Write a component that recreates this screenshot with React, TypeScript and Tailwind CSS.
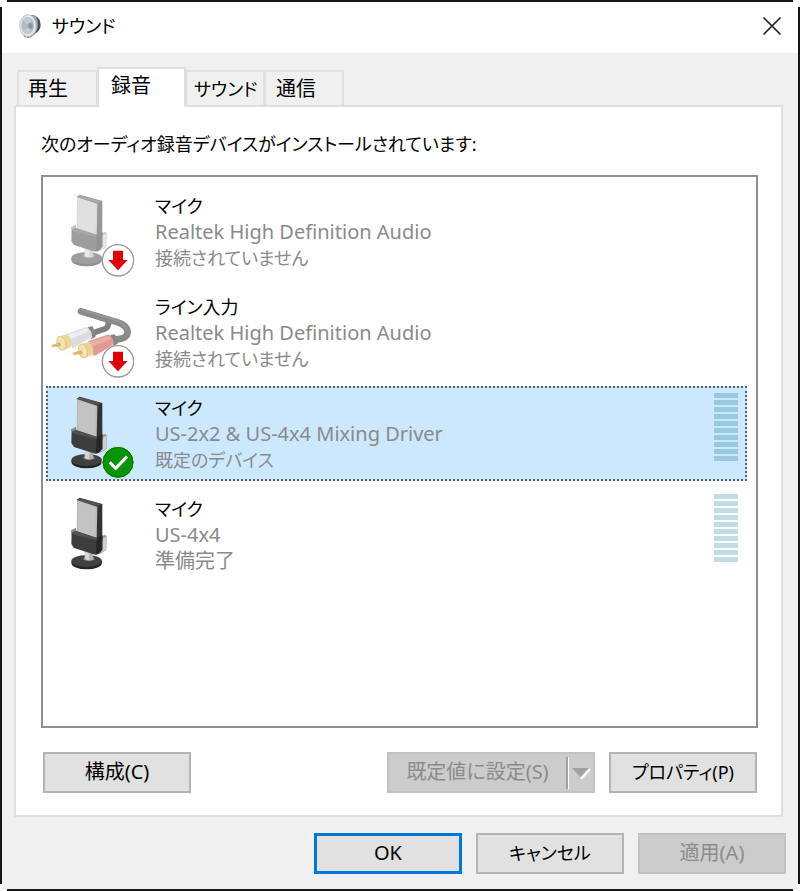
import { useState } from 'react'
import type { ReactNode } from 'react'
import clsx from 'clsx'

type DeviceStatus = 'unplugged' | 'default' | 'ready'

interface Device {
  id: string
  kind: 'mic' | 'line'
  name: string
  driver: string
  statusText: string
  status: DeviceStatus
}

const DEVICES: Device[] = [
  { id: 'mic-realtek', kind: 'mic', name: 'マイク', driver: 'Realtek High Definition Audio', statusText: '接続されていません', status: 'unplugged' },
  { id: 'line-realtek', kind: 'line', name: 'ライン入力', driver: 'Realtek High Definition Audio', statusText: '接続されていません', status: 'unplugged' },
  { id: 'mic-mixing', kind: 'mic', name: 'マイク', driver: 'US-2x2 & US-4x4 Mixing Driver', statusText: '既定のデバイス', status: 'default' },
  { id: 'mic-us4x4', kind: 'mic', name: 'マイク', driver: 'US-4x4', statusText: '準備完了', status: 'ready' },
]

const TABS = [
  { id: 'playback', label: '再生', size: 'w-[81px] pl-[9px]' },
  { id: 'recording', label: '録音', size: 'w-[89px] pl-3' },
  { id: 'sounds', label: 'サウンド', size: 'w-20 pl-[7px]' },
  { id: 'comms', label: '通信', size: 'w-20 pl-[10px]' },
]

const labelSize = (text: string) => (/[ぁ-ヶ]{2}/.test(text) ? 'text-[18px]' : 'text-[20px]')

function SpeakerIcon() {
  return (
    <svg viewBox="0 0 72 78" className="w-6 h-[26px]" aria-hidden="true">
      <path d="M38 6 L52 8 Q68 16 68 38 Q66 52 54 60 L38 72 Z" fill="#4f5355" />
      <path d="M42 7 L54 10 Q61 22 59 42 Q56 58 42 70 Z" fill="#9fa2a4" />
      <ellipse cx="30" cy="39" rx="25" ry="34" fill="#e6e8e8" stroke="#b4b8ba" strokeWidth="2" />
      <path d="M18 68 Q34 80 48 62" fill="none" stroke="#85898b" strokeWidth="4" strokeDasharray="7 3" />
      <path d="M8 24 Q18 4 34 7" fill="none" stroke="#c9cccd" strokeWidth="4" strokeDasharray="7 3" />
      <ellipse cx="29" cy="38" rx="19" ry="26" fill="#aebcc4" />
      <path d="M14 22 Q26 6 40 20 L32 38 Z" fill="#bfcbd2" />
      <ellipse cx="37" cy="39" rx="7" ry="9" fill="#8698a2" />
      <path d="M14 50 Q24 70 40 58 L33 45 Z" fill="#c3ced4" />
    </svg>
  )
}

function MicDrawing() {
  return (
    <g transform="translate(2 3)">
      <ellipse cx="108" cy="221" rx="46" ry="20" fill="#232323" />
      <ellipse cx="108" cy="216" rx="46" ry="18" fill="#404040" />
      <ellipse cx="115" cy="209" rx="17" ry="7" fill="#8d8d8d" />
      <path d="M100 182 H129 L126 211 Q114 217 103 210 Z" fill="#d4d4d4" />
      <path d="M116 188 H129 L126 211 L116 214 Z" fill="#b0b0b0" />
      <path d="M61 124 L76 116 L80 150 L64 168 Z" fill="#8a8a8a" />
      <path d="M140 146 L164 137 L168 141 L167 183 L146 196 Z" fill="#9a9a9a" />
      <path d="M151 151 L167 143 L166 182 L151 190 Z" fill="#cfcfcf" />
      <path d="M78 32 L87 26 L155 45 L155 155 L138 163 Z" fill="#333333" />
      <path d="M80 32 L88 28 L152 46 L141 51 Z" fill="#565656" />
      <path d="M79 33 L140 53 L138 152 L78 130 Z" fill="#b9b9b9" />
      <path d="M83 38 L135 55 L134 146 L82 127 Z" fill="#c3c3c3" />
      <path d="M64 131 L76 126 L138 146 L155 139 L155 182 L143 195 L134 197 L70 177 L62 165 Z" fill="#3d3d3d" />
      <path d="M138 146 L155 139 L155 182 L143 195 L136 196 Z" fill="#272727" />
      <path d="M65 132 L76 127 L138 147 L137 154 L66 136 Z" fill="#525252" />
    </g>
  )
}

function CableDrawing() {
  return (
    <g>
      <g fill="none" strokeLinecap="round">
        <path d="M93 76 L172 100 Q184 126 152 133 L125 142" stroke="#808080" strokeWidth="17" />
        <path d="M93 76 L186 104 Q238 116 232 143 Q228 160 192 160" stroke="#8a8a8a" strokeWidth="20" />
        <path d="M94 72 L187 99 Q229 111 230 135" stroke="#989898" strokeWidth="5" />
      </g>
      <path d="M114 123 L128 121 L138 151 L124 160 Z" fill="#858585" />
      <path d="M181 147 L195 145 L204 172 L191 181 Z" fill="#858585" />
      <path d="M50 144 L110 123 Q128 135 126 154 L68 187 Z" fill="#dcdce0" />
      <path d="M52 147 L110 126 L117 136 L58 161 Z" fill="#eeeef0" />
      <path d="M115 166 L176 145 Q193 157 191 176 L132 211 Z" fill="#e09b96" />
      <path d="M117 169 L176 149 L183 159 L124 183 Z" fill="#e8aea9" />
      <path d="M29 151 L52 145 Q68 162 62 184 L37 193 Q43 170 29 151 Z" fill="#ecd494" />
      <ellipse cx="34" cy="172" rx="13" ry="21" transform="rotate(-15 34 172)" fill="#f4e3b3" stroke="#e3c682" strokeWidth="3" />
      <path d="M3 178 L30 169 L34 181 L8 184 Z" fill="#dcb972" />
      <path d="M94 174 L117 167 Q134 184 128 207 L102 215 Q109 194 94 174 Z" fill="#ecd494" />
      <ellipse cx="99" cy="195" rx="13" ry="21" transform="rotate(-15 99 195)" fill="#f4e3b3" stroke="#e3c682" strokeWidth="3" />
      <path d="M67 201 L95 192 L99 204 L72 207 Z" fill="#dcb972" />
    </g>
  )
}

function DeviceIcon({ kind, status }: { kind: Device['kind']; status: DeviceStatus }) {
  return (
    <svg viewBox="0 3 252 276" className="w-[84px] h-[92px] shrink-0" aria-hidden="true">
      <g opacity={kind === 'mic' && status === 'unplugged' ? 0.5 : 1}>
        {kind === 'mic' ? <MicDrawing /> : <CableDrawing />}
      </g>
      {status === 'unplugged' && (
        <g>
          <circle cx="204" cy="226" r="47" fill="#fff" stroke="#999" strokeWidth="4" />
          <path d="M189 197 H219 V225 H233 L204 256 L175 225 H189 Z" fill="#dc0008" />
        </g>
      )}
      {status === 'default' && (
        <g>
          <circle cx="204" cy="226" r="48" fill="#079407" stroke="#e9f4e9" strokeWidth="3" />
          <circle cx="204" cy="226" r="45" fill="none" stroke="#057805" strokeWidth="3" />
          <path d="M179 226 L197 244 L231 209" fill="none" stroke="#fff" strokeWidth="9" />
        </g>
      )}
    </svg>
  )
}

function LevelMeter({ active }: { active: boolean }) {
  return (
    <div className="flex flex-col gap-0.5 pt-[5px]">
      {Array.from({ length: 10 }, (_, i) => (
        <div key={i} className={clsx('w-6 h-[5px]', active ? 'bg-[#9acae1]' : 'bg-[#c1dce2]')} />
      ))}
    </div>
  )
}

interface DialogButtonProps {
  children: ReactNode
  primary?: boolean
  disabled?: boolean
}

function DialogButton({ children, primary, disabled }: DialogButtonProps) {
  return (
    <button
      type="button"
      disabled={disabled}
      className={clsx(
        'w-[148px] h-[41px] pb-0.5 text-center',
        labelSize(String(children)),
        primary ? 'border-3 border-[#0078d7] bg-[#e1e1e1]' : 'border-2',
        !primary && !disabled && 'border-[#b3b3b3] bg-[#e1e1e1]',
        disabled && 'border-[#c2c2c2] bg-[#cccccc] text-[#8b8b8b]',
      )}
    >
      {children}
    </button>
  )
}

export default function App() {
  const [tab, setTab] = useState('recording')
  const [selected, setSelected] = useState('mic-mixing')

  return (
    <div className="min-h-screen flex flex-col bg-[#f8f8f8] text-black text-[20px] leading-[26px] font-['Noto_Sans','Noto_Sans_CJK_JP',sans-serif] [font-feature-settings:'palt']">
      <div className="h-0.5 mx-[7px] bg-[#151515]" />

      <div className="flex-1 flex">
        <div className="w-0.5 my-[5px] bg-[#151515]" />

        <div className="flex-1 flex flex-col bg-[#f0f0f0]">
          <header className="h-[51px] flex items-center bg-white pl-4 pr-3 pb-[3px]">
            <SpeakerIcon />
            <h1 className="flex-1 pl-[10px] text-[18px]">サウンド</h1>
            <button type="button" aria-label="閉じる" className="p-1">
              <svg viewBox="0 0 20 20" className="w-5 h-5" fill="none" stroke="#222" strokeWidth="1.7">
                <path d="M1.500 1.500 L18.500 18.500 M18.500 1.500 L1.500 18.500" />
              </svg>
            </button>
          </header>

          <div className="flex-1 flex flex-col pt-[14px] pl-3 pr-[15px] pb-[15px]">
            <div role="tablist" className="flex items-end pl-[3px]">
              {TABS.map(t => (
                <button
                  key={t.id}
                  type="button"
                  role="tab"
                  aria-selected={tab === t.id}
                  onClick={() => setTab(t.id)}
                  className={clsx(
                    'border-2 border-b-0 border-[#dfdfdf] text-left whitespace-nowrap -mr-px',
                    t.size,
                    labelSize(t.label),
                    tab === t.id ? 'h-10 -mb-0.5 pb-1 bg-white relative z-10' : 'h-[35px] bg-[#f0f0f0]',
                  )}
                >
                  {t.label}
                </button>
              ))}
            </div>

            <main className="flex-1 flex flex-col bg-white border-2 border-[#dfdfdf] pt-6 pl-[25px] pr-[23px] pb-[22px]">
              <p id="device-label" className="text-[18px]">次のオーディオ録音デバイスがインストールされています:</p>

              <div
                role="listbox"
                aria-labelledby="device-label"
                className="flex-1 flex flex-col gap-1.5 mt-[18px] pt-[7px] pl-[3px] pr-[9px] pb-5 border-2 border-[#8b9098] bg-white"
              >
                {DEVICES.map(d => (
                  <button
                    key={d.id}
                    type="button"
                    role="option"
                    aria-selected={selected === d.id}
                    onClick={() => setSelected(d.id)}
                    className={clsx(
                      'h-[95px] flex items-start border-2 border-dotted pl-0.5 pr-[7px] text-left',
                      selected === d.id ? 'border-[#59616a] bg-[#cce8ff]' : 'border-transparent',
                    )}
                  >
                    <DeviceIcon kind={d.kind} status={d.status} />
                    <span className="flex-1 flex flex-col pl-[21px] pt-[7px]">
                      <span className={labelSize(d.name)}>{d.name}</span>
                      <span className="text-[#8a8a8a]">{d.driver}</span>
                      <span className={clsx('text-[#8a8a8a]', labelSize(d.statusText))}>{d.statusText}</span>
                    </span>
                    {d.status !== 'unplugged' && <LevelMeter active={selected === d.id} />}
                  </button>
                ))}
              </div>

              <div className="flex mt-6 pl-0.5 pr-px">
                <DialogButton>構成(C)</DialogButton>
                <button
                  type="button"
                  disabled
                  className="w-52 h-[41px] ml-auto mr-[14px] flex items-center border-2 border-[#c2c2c2] bg-[#cccccc] text-[#8b8b8b]"
                >
                  <span className="flex-1 text-center pb-0.5">既定値に設定(S)</span>
                  <span className="w-[3px] h-8 border-l-2 border-r border-l-[#a0a0a0] border-r-white" />
                  <svg viewBox="0 0 24 20" className="w-6 h-5" aria-hidden="true">
                    <path d="M12 16 L21 6" fill="none" stroke="#fff" strokeWidth="2" />
                    <path d="M3 5 H20 L11 14 Z" fill="#a0a0a0" />
                  </svg>
                </button>
                <DialogButton>プロパティ(P)</DialogButton>
              </div>
            </main>

            <footer className="flex justify-end gap-[14px] pt-4 -mr-[3px]">
              <DialogButton primary>OK</DialogButton>
              <DialogButton>キャンセル</DialogButton>
              <DialogButton disabled>適用(A)</DialogButton>
            </footer>
          </div>
        </div>

        <div className="w-0.5 my-[5px] bg-[#151515]" />
      </div>

      <div className="h-0.5 mx-[7px] bg-[#151515]" />
    </div>
  )
}
